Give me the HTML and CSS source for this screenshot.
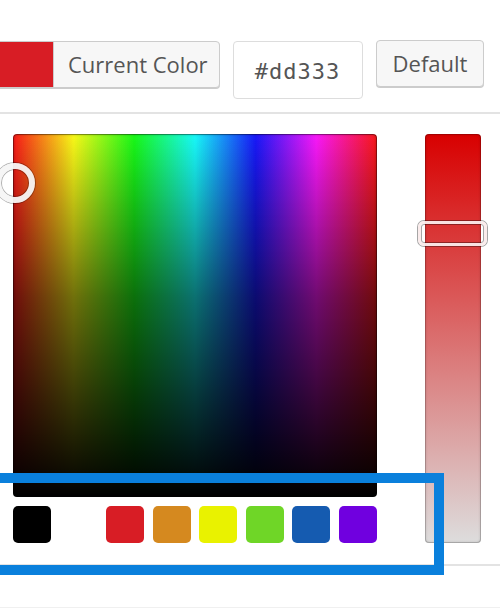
FILE: index.html
```html
<!DOCTYPE html>
<html>
<head>
<meta charset="utf-8">
<link rel="stylesheet" href="styles.css">
</head>
<body>
<div class="page">
  <div class="toolbar">
    <button class="current"><span class="current-swatch"></span><span class="current-label">Current Color</span></button>
    <div class="hex">#dd333</div>
    <button class="default">Default</button>
  </div>
  <div class="divider"></div>
  <div class="picker">
    <div class="main">
      <div class="square">
        <span class="square-handle"></span>
      </div>
      <div class="swatches">
        <span class="swatch sw-black"></span>
        <span class="swatch sw-white"></span>
        <span class="swatch sw-red"></span>
        <span class="swatch sw-orange"></span>
        <span class="swatch sw-yellow"></span>
        <span class="swatch sw-green"></span>
        <span class="swatch sw-blue"></span>
        <span class="swatch sw-purple"></span>
      </div>
    </div>
    <div class="strip">
      <span class="strip-handle"></span>
    </div>
  </div>
  <div class="sep"></div>
  <div class="footer"></div>
  <div class="highlight"></div>
</div>
</body>
</html>
```

FILE: styles.css
```css
html, body {
  margin: 0;
  padding: 0;
  background: #fff;
}
.page {
  position: relative;
  width: 500px;
  height: 612px;
  overflow: hidden;
  font-family: "Open Sans", "DejaVu Sans", sans-serif;
}
.toolbar {
  display: flex;
  align-items: flex-start;
  gap: 13px;
  height: 112px;
  box-sizing: border-box;
  padding-top: 41px;
  margin-left: -12px;
}
.current {
  display: flex;
  align-items: stretch;
  height: 47px;
  padding: 0;
  border: 1px solid #ccc;
  border-radius: 4px;
  background: #f7f7f7;
  box-shadow: 0 1px 0 #ccc;
  overflow: hidden;
  font-family: inherit;
  cursor: pointer;
}
.current-swatch {
  width: 64px;
  background: #d81d25;
}
.current-label {
  display: flex;
  align-items: center;
  padding: 0 11px 2px 14px;
  font-size: 22px;
  color: #555;
  border-left: 1px solid #ccc;
}
.hex {
  display: flex;
  align-items: center;
  justify-content: center;
  width: 130px;
  height: 58px;
  box-sizing: border-box;
  border: 1px solid #ddd;
  border-radius: 4px;
  background: #fff;
  font-family: "DejaVu Sans Mono", monospace;
  font-size: 22px;
  letter-spacing: 1px;
  color: #555;
  padding-top: 2px;
}
.default {
  height: 47px;
  margin-top: -1px;
  padding: 0 16px 2px 16px;
  border: 1px solid #ccc;
  border-radius: 4px;
  background: #f7f7f7;
  box-shadow: 0 1px 0 #ccc;
  font-family: inherit;
  font-size: 22px;
  color: #555;
}
.divider {
  height: 2px;
  background: #e3e3e3;
}
.picker {
  display: flex;
  gap: 48px;
  padding: 20px 0 0 13px;
}
.main {
  width: 364px;
}
.square {
  position: relative;
  height: 363px;
  border-radius: 4px;
  background:
    linear-gradient(to bottom, rgba(0,0,0,0) 0%, rgba(0,0,0,0.55) 45%, rgba(0,0,0,1) 100%),
    linear-gradient(rgba(200,200,200,0.12), rgba(200,200,200,0.12)),
    linear-gradient(to right, #f00 0%, #ff0 16.66%, #0f0 33.33%, #0ff 50%, #00f 66.66%, #f0f 83.33%, #f00 100%);
  box-shadow: inset 0 0 0 1px rgba(0,0,0,0.3), inset 0 0 3px rgba(0,0,0,0.5);
}
.square-handle {
  position: absolute;
  left: -18px;
  top: 29px;
  width: 40px;
  height: 40px;
  box-sizing: border-box;
  border-radius: 50%;
  border: 6px solid rgba(245,245,245,0.95);
  box-shadow: 0 0 0 1px rgba(0,0,0,0.3), inset 0 0 0 1px rgba(0,0,0,0.3);
}
.swatches {
  display: flex;
  justify-content: space-between;
  margin-top: 9px;
}
.swatch {
  width: 38px;
  height: 37px;
  border-radius: 5px;
}
.sw-black { background: #000; }
.sw-white { background: #fff; }
.sw-red { background: #d81d25; }
.sw-orange { background: #d5891f; }
.sw-yellow { background: #e9f200; }
.sw-green { background: #6fd627; }
.sw-blue { background: #155bb0; }
.sw-purple { background: #7000df; }
.strip {
  position: relative;
  width: 56px;
  height: 409px;
  border-radius: 4px;
  background: linear-gradient(to bottom, #d80000 0%, #dddddd 100%);
  box-shadow: inset 0 0 0 1px rgba(0,0,0,0.15), inset 0 0 3px rgba(0,0,0,0.3);
}
.strip-handle {
  position: absolute;
  left: -7px;
  top: 87px;
  width: 69px;
  height: 25px;
  box-sizing: border-box;
  border-radius: 6px;
  border: 3px solid rgba(250,235,235,0.95);
  box-shadow: 0 0 0 1px rgba(0,0,0,0.35), inset 0 0 0 1px rgba(0,0,0,0.35);
}
.sep {
  margin-top: 21px;
  height: 2px;
  background: #e3e3e3;
}
.footer {
  height: 41px;
  border-bottom: 1px solid #f0f0f0;
}
.highlight {
  position: absolute;
  left: -20px;
  top: 473px;
  width: 464px;
  height: 102px;
  box-sizing: border-box;
  border: 10px solid #0a80dc;
}
```
